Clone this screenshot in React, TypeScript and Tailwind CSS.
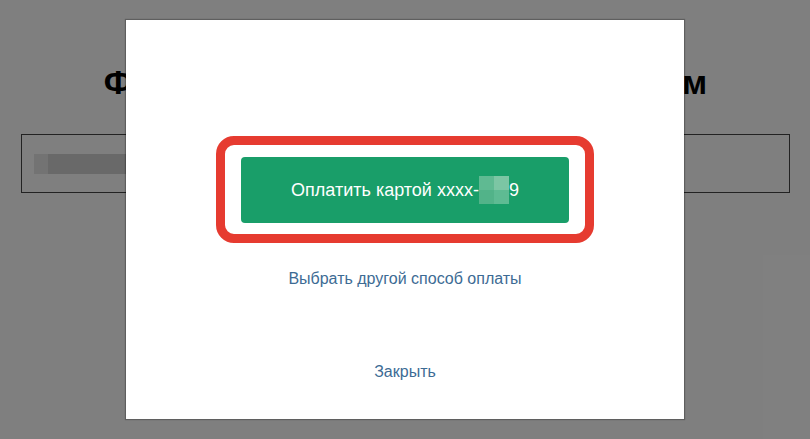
export default function App() {
  return (
    <div className="relative h-[439px] w-[810px] overflow-hidden bg-white font-['Liberation_Sans',Arial,sans-serif]">
      {/* page behind the dialog */}
      <div className="flex flex-col items-center pt-[58px]">
        <h1 className="whitespace-nowrap text-[34px] font-bold leading-[48px] tracking-[-1px] text-black">
          Форма оплаты банковским платежом
        </h1>
        <div className="mt-[28px] ml-[21px] flex h-[59px] w-[769px] items-center self-start border border-[#444] px-[12px]">
          <div className="flex h-[20px] w-[140px]">
            <div className="h-full w-[14px] bg-[#e6e6e6]" />
            <div className="h-full w-[80px] bg-[#d2d2d2]" />
            <div className="h-full w-[46px] bg-[#dcdcdc]" />
          </div>
        </div>
      </div>

      {/* overlay */}
      <div className="absolute inset-0 flex items-start justify-center bg-black/50 pt-[20px]">
        <div className="flex h-[399px] w-[558px] flex-col items-center bg-white pt-[116px] shadow-[0_0_1px_1px_rgba(0,0,0,0.25)]">
          <div className="rounded-[18px] border-[9px] border-[#e63b30] px-[16px] pt-[12px] pb-[11px]">
            <button className="flex h-[66px] w-[328px] items-center justify-center rounded-[4px] bg-[#199e69] text-[18px] text-white">
              <span>Оплатить картой xxxx-</span>
              <span className="flex h-[28px] w-[30px] flex-col">
                <span className="flex h-1/2">
                  <span className="w-1/2 bg-[#5fba92]" />
                  <span className="w-1/2 bg-[#7cc6a4]" />
                </span>
                <span className="flex h-1/2">
                  <span className="w-1/2 bg-[#52b389]" />
                  <span className="w-1/2 bg-[#5ebb93]" />
                </span>
              </span>
              <span>9</span>
            </button>
          </div>
          <a className="mt-[26px] cursor-pointer text-[16px] leading-[20px] text-[#3d6b94]">
            Выбрать другой способ оплаты
          </a>
          <a className="mt-[73px] cursor-pointer text-[16px] leading-[20px] text-[#3d6b94]">
            Закрыть
          </a>
        </div>
      </div>
    </div>
  );
}
